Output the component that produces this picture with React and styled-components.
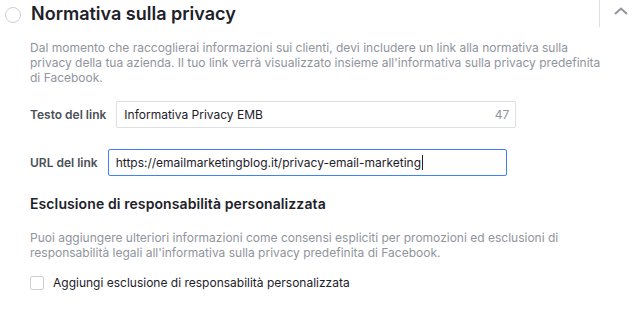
import styled, { createGlobalStyle } from "styled-components";

const GlobalStyle = createGlobalStyle`
  body {
    margin: 0;
    background: #fff;
    font-family: Inter, "Liberation Sans", Arial, sans-serif;
    color: #1d2129;
  }
`;

function App() {
  return (
    <>
      <GlobalStyle />
      <Section>
        <Header>
          <Radio />
          <Title>Normativa sulla privacy</Title>
          <Divider />
          <Toggle>
            <svg width="14" height="8" viewBox="0 0 14 8">
              <path d="M1 7 L7 1.5 L13 7" fill="none" stroke="#90949c" strokeWidth="2" />
            </svg>
          </Toggle>
        </Header>
        <Body>
          <Hint>
            Dal momento che raccoglierai informazioni sui clienti, devi includere un link alla normativa sulla<br />
            privacy della tua azienda. Il tuo link verrà visualizzato insieme all'informativa sulla privacy predefinita<br />
            di Facebook.
          </Hint>
          <Field $top={16}>
            <Label>Testo del link</Label>
            <InputBox $width={400}>
              <Value>Informativa Privacy EMB</Value>
              <Counter>47</Counter>
            </InputBox>
          </Field>
          <Field $top={21}>
            <Label>URL del link</Label>
            <InputBox $width={399} $focus>
              <Value>https://emailmarketingblog.it/privacy-email-marketing<Caret /></Value>
            </InputBox>
          </Field>
          <SubTitle>Esclusione di responsabilità personalizzata</SubTitle>
          <Hint $top={17}>
            Puoi aggiungere ulteriori informazioni come consensi espliciti per promozioni ed esclusioni di<br />
            responsabilità legali all'informativa sulla privacy predefinita di Facebook.
          </Hint>
          <CheckRow>
            <Box />
            <span>Aggiungi esclusione di responsabilità personalizzata</span>
          </CheckRow>
        </Body>
      </Section>
    </>
  );
}
export default App;

const Section = styled.div`
  width: 642px;
`;

const Header = styled.div`
  display: flex;
  align-items: center;
  height: 27px;
`;

const Radio = styled.span`
  width: 14px;
  height: 14px;
  margin: 2px 0 0 5px;
  border: 1px solid #ccd0d5;
  border-radius: 50%;
`;

const Title = styled.h2`
  flex: 1;
  margin: 0 0 0 10px;
  font-size: 18px;
  line-height: 23px;
  font-weight: 600;
  color: #1d2129;
`;

const Divider = styled.span`
  align-self: stretch;
  width: 1px;
  background: #dddfe2;
`;

const Toggle = styled.span`
  width: 42px;
  display: flex;
  justify-content: center;
  align-self: flex-start;
  padding-top: 7px;
`;

const Body = styled.div`
  padding: 0 0 0 30px;
`;

const Hint = styled.p`
  margin: ${(p) => p.$top ?? 13}px 0 0;
  font-size: 12px;
  line-height: 15px;
  color: #90949c;
`;

const Field = styled.div`
  display: flex;
  align-items: center;
  gap: 10px;
  margin-top: ${(p) => p.$top}px;
`;

const Label = styled.label`
  font-size: 12px;
  line-height: 16px;
  font-weight: 600;
  color: #4b4f56;
`;

const InputBox = styled.div`
  box-sizing: border-box;
  display: flex;
  align-items: center;
  width: ${(p) => p.$width}px;
  height: 27px;
  padding: 0 6px 0 7px;
  border: 1px solid ${(p) => (p.$focus ? "#4080ff" : "#dddfe2")};
  border-radius: 2px;
  font-size: 12px;
  line-height: 16px;
  color: #1d2129;
`;

const Value = styled.span`
  flex: 1;
  white-space: nowrap;
`;

const Caret = styled.span`
  display: inline-block;
  width: 1px;
  height: 15px;
  margin-left: 1px;
  vertical-align: -3px;
  background: #1d2129;
`;

const Counter = styled.span`
  color: #90949c;
`;

const SubTitle = styled.h3`
  margin: 19px 0 0;
  font-size: 14px;
  line-height: 18px;
  font-weight: 600;
  letter-spacing: 0.1px;
  color: #1d2129;
`;

const CheckRow = styled.label`
  display: flex;
  align-items: center;
  gap: 9px;
  margin-top: 15px;
  font-size: 12px;
  line-height: 16px;
  color: #1d2129;
`;

const Box = styled.span`
  width: 12px;
  height: 12px;
  border: 1px solid #ccd0d5;
  border-radius: 2px;
`;
